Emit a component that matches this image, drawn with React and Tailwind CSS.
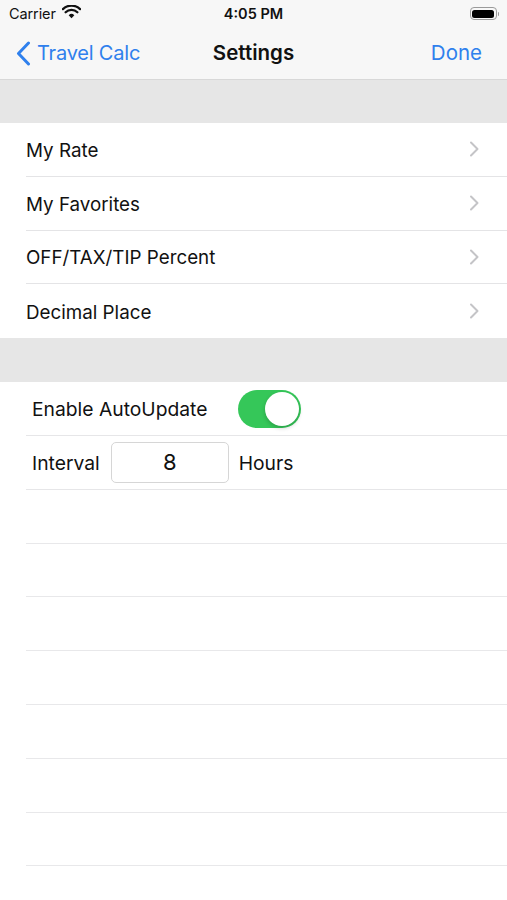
import React from "react";

const font = { fontFamily: "Inter, 'Liberation Sans', sans-serif" };

function Chevron() {
  return (
    <svg width="10" height="16" viewBox="0 0 10 16" className="shrink-0">
      <path d="M2 1.5 L8.5 8 L2 14.5" fill="none" stroke="#c4c4c7" strokeWidth="2" strokeLinecap="round" strokeLinejoin="round" />
    </svg>
  );
}

function NavRow({ label, last }) {
  return (
    <div className="h-[53.8px] shrink-0 flex items-stretch bg-white">
      <div className={`flex-1 ml-[26px] flex items-center justify-between pr-[28px] ${last ? "" : "border-b border-[#e4e4e6]"}`}>
        <span className="text-[18.8px] text-[#111] pt-[3px]">{label}</span>
        <Chevron />
      </div>
    </div>
  );
}

export default function App() {
  return (
    <div className="w-[507px] h-[900px] bg-white overflow-hidden flex flex-col" style={font}>
      {/* status + nav */}
      <div className="bg-[#f7f7f7] border-b border-[#d8d8d8] h-[80px] shrink-0 flex flex-col">
        <div className="h-[27px] shrink-0 relative flex items-center px-[9px]">
          <span className="text-[14.5px] text-[#111] tracking-[-0.1px]">Carrier</span>
          <svg width="19" height="14" viewBox="0 0 19 14" className="ml-[6px] mb-[3px]">
            <path d="M9.5 13.2 L6.7 10.2 A4 4 0 0 1 12.3 10.2 Z" fill="#111" />
            <path d="M3.6 7.2 A8.4 8.4 0 0 1 15.4 7.2" fill="none" stroke="#111" strokeWidth="2.3" strokeLinecap="round" />
            <path d="M0.9 4.1 A12.4 12.4 0 0 1 18.1 4.1" fill="none" stroke="#111" strokeWidth="2.3" strokeLinecap="round" />
          </svg>
          <span className="absolute left-1/2 -translate-x-1/2 text-[14.5px] font-semibold text-[#111]">4:05 PM</span>
          <div className="absolute right-[8px] top-[7px] flex items-center">
            <div className="w-[27px] h-[13px] rounded-[4px] border border-[#9a9a9a] p-[1.5px]">
              <div className="w-full h-full rounded-[2.5px] bg-black" />
            </div>
            <div className="w-[1.5px] h-[4px] bg-[#9a9a9a] rounded-r-sm ml-[1px]" />
          </div>
        </div>
        <div className="flex-1 relative flex items-center">
          <div className="flex items-center ml-[16px] text-[#2f80ed] text-[20px]">
            <svg width="15" height="25" viewBox="0 0 15 25" className="mr-[6px]">
              <path d="M12.5 2 L2.5 12.5 L12.5 23" fill="none" stroke="#2f80ed" strokeWidth="3" strokeLinecap="round" strokeLinejoin="round" />
            </svg>
            <span className="tracking-[-0.2px]">Travel Calc</span>
          </div>
          <span className="absolute left-1/2 -translate-x-1/2 text-[20.5px] font-semibold text-[#111]">Settings</span>
          <span className="absolute right-[25px] text-[20.5px] text-[#2f80ed]">Done</span>
        </div>
      </div>

      <div className="h-[43px] bg-[#e6e6e6] shrink-0" />

      <NavRow label="My Rate" />
      <NavRow label="My Favorites" />
      <NavRow label="OFF/TAX/TIP Percent" />
      <NavRow label="Decimal Place" last />

      <div className="h-[44px] bg-[#e6e6e6] shrink-0" />

      <div className="h-[53.8px] shrink-0 flex items-stretch">
        <div className="flex-1 ml-[26px] border-b border-[#e6e6e8] flex items-center pl-[6px]">
          <span className="text-[19.3px] text-[#111] pt-[2px]">Enable AutoUpdate</span>
          <div className="ml-[31px] w-[63px] h-[38px] rounded-full bg-[#35c759] relative">
            <div className="absolute right-[2px] top-[2px] w-[34px] h-[34px] rounded-full bg-white shadow-[0_2px_4px_rgba(0,0,0,0.2)]" />
          </div>
        </div>
      </div>
      <div className="h-[53.8px] shrink-0 flex items-stretch">
        <div className="flex-1 ml-[26px] border-b border-[#e6e6e8] flex items-center pl-[6px]">
          <span className="text-[19.3px] text-[#111] pt-[2px]">Interval</span>
          <div className="ml-[11px] w-[118px] h-[41px] border border-[#d6d6d6] rounded-[5px] flex items-center justify-center text-[22px] text-[#111]">8</div>
          <span className="ml-[10px] text-[19.3px] text-[#111] pt-[2px]">Hours</span>
        </div>
      </div>
      {[0, 1, 2, 3, 4, 5, 6, 7].map((i) => (
        <div key={i} className="h-[53.8px] shrink-0 flex items-stretch">
          <div className="flex-1 ml-[26px] border-b border-[#e8e8ea]" />
        </div>
      ))}
    </div>
  );
}
